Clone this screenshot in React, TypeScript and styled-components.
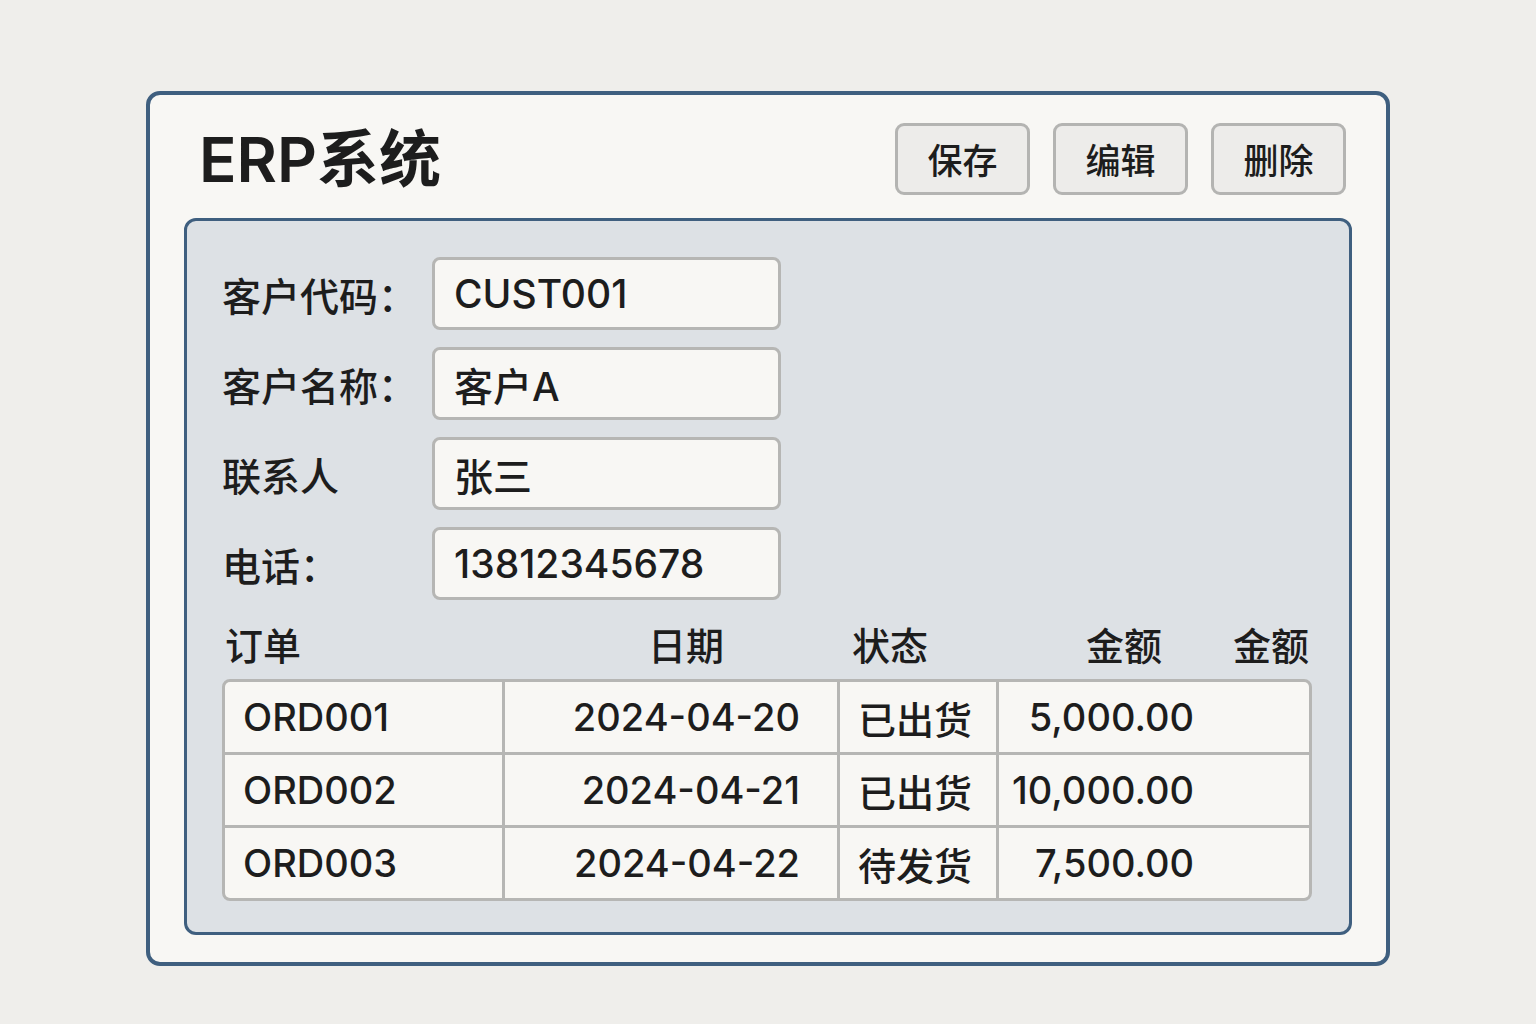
import React from 'react';
import styled, { createGlobalStyle } from 'styled-components';

const GlobalStyle = createGlobalStyle`
  html, body {
    margin: 0;
    padding: 0;
    background: #efeeeb;
    font-family: Inter, "Noto Sans CJK SC", sans-serif;
    color: #1d1d1d;
  }
`;

const Page = styled.div`
  width: 1536px;
  height: 1024px;
  padding-top: 91px;
  box-sizing: border-box;
`;

const Window = styled.div`
  width: 1244px;
  height: 875px;
  margin: 0 auto;
  box-sizing: border-box;
  border: 4px solid #3f5f7f;
  border-radius: 14px;
  background: #f8f7f4;
  padding: 28px 34px 30px 34px;
  display: flex;
  flex-direction: column;
  gap: 24px;
`;

const Header = styled.div`
  display: flex;
  align-items: center;
  justify-content: space-between;
  height: 71px;
  padding-right: 6px;
`;

const Title = styled.h1`
  margin: 0 0 8px 15px;
  font-family: Inter, "Noto Sans CJK SC", sans-serif;
  font-size: 62px;
  font-weight: 600;
`;

const Toolbar = styled.div`
  display: flex;
  gap: 23px;
`;

const ToolButton = styled.button`
  width: 135px;
  height: 72px;
  box-sizing: border-box;
  border: 3px solid #b4b4b2;
  border-radius: 9px;
  background: #edecea;
  font-family: "Noto Sans CJK SC", sans-serif;
  font-size: 35px;
  font-weight: 500;
  color: #1d1d1d;
  padding: 0;
`;

const Panel = styled.div`
  flex: 1;
  box-sizing: border-box;
  border: 3px solid #3f5f7f;
  border-radius: 12px;
  background: #dde1e5;
  padding: 36px 37px 31px 35px;
  display: flex;
  flex-direction: column;
`;

const Form = styled.div`
  display: flex;
  flex-direction: column;
  gap: 17px;
`;

const FieldRow = styled.div`
  display: flex;
  align-items: center;
  height: 73px;
`;

const Label = styled.div`
  width: 210px;
  font-family: "Noto Sans CJK SC", sans-serif;
  font-size: 39px;
  font-weight: 500;
`;

const Input = styled.div`
  width: 349px;
  height: 73px;
  box-sizing: border-box;
  border: 3px solid #b6b6b4;
  border-radius: 8px;
  background: #f8f7f4;
  display: flex;
  align-items: center;
  padding-left: 19px;
  font-family: Inter, "Noto Sans CJK SC", sans-serif;
  font-size: 39px;
  font-weight: 500;
`;

const cols = '277px 332px 156px 1fr';

const TableHead = styled.div`
  display: grid;
  grid-template-columns: ${cols};
  height: 79px;
  align-items: center;
  padding: 8px 3px 0 3px;
  box-sizing: border-box;
  font-family: "Noto Sans CJK SC", sans-serif;
  font-size: 38px;
  font-weight: 500;
`;

const HeadCell = styled.div<{ $align?: string; $pad?: number }>`
  display: flex;
  justify-content: ${(p) => p.$align || 'flex-start'};
  gap: 71px;
  padding-left: ${(p) => (p.$align === 'flex-end' ? 0 : p.$pad ?? 0)}px;
  padding-right: ${(p) => (p.$align === 'flex-end' ? p.$pad ?? 0 : 0)}px;
`;

const Table = styled.div`
  border: 3px solid #b6b6b4;
  border-radius: 8px;
  overflow: hidden;
  background: #b6b6b4;
  display: grid;
  grid-template-columns: ${cols};
  gap: 3px;
`;

const Cell = styled.div<{ $align?: string; $pad?: number }>`
  height: 70px;
  background: #f8f7f4;
  display: flex;
  align-items: center;
  justify-content: ${(p) => p.$align || 'flex-start'};
  padding: 0 ${(p) => (p.$align === 'flex-end' ? p.$pad ?? 20 : 0)}px 0
    ${(p) => (p.$align === 'flex-end' ? 0 : p.$pad ?? 18)}px;
  font-family: Inter, "Noto Sans CJK SC", sans-serif;
  font-size: 38px;
  font-weight: 500;
  white-space: nowrap;
`;

const fields = [
  { label: '客户代码：', value: 'CUST001' },
  { label: '客户名称：', value: '客户A' },
  { label: '联系人', value: '张三' },
  { label: '电话：', value: '13812345678' },
];

const orders = [
  { id: 'ORD001', date: '2024-04-20', status: '已出货', amount: '5,000.00' },
  { id: 'ORD002', date: '2024-04-21', status: '已出货', amount: '10,000.00' },
  { id: 'ORD003', date: '2024-04-22', status: '待发货', amount: '7,500.00' },
];

export default function App() {
  return (
    <Page>
      <GlobalStyle />
      <Window>
        <Header>
          <Title>ERP系统</Title>
          <Toolbar>
            <ToolButton>保存</ToolButton>
            <ToolButton>编辑</ToolButton>
            <ToolButton>删除</ToolButton>
          </Toolbar>
        </Header>
        <Panel>
          <Form>
            {fields.map((f) => (
              <FieldRow key={f.label}>
                <Label>{f.label}</Label>
                <Input>{f.value}</Input>
              </FieldRow>
            ))}
          </Form>
          <TableHead>
            <HeadCell $pad={0}>订单</HeadCell>
            <HeadCell $align="flex-end" $pad={110}>日期</HeadCell>
            <HeadCell $pad={18}>状态</HeadCell>
            <HeadCell $align="flex-end" $pad={0}>
              <span>金额</span>
              <span>金额</span>
            </HeadCell>
          </TableHead>
          <Table>
            {orders.map((o) => (
              <React.Fragment key={o.id}>
                <Cell>{o.id}</Cell>
                <Cell $align="flex-end" $pad={37}>{o.date}</Cell>
                <Cell $pad={18}>{o.status}</Cell>
                <Cell $align="flex-end" $pad={115}>{o.amount}</Cell>
              </React.Fragment>
            ))}
          </Table>
        </Panel>
      </Window>
    </Page>
  );
}
